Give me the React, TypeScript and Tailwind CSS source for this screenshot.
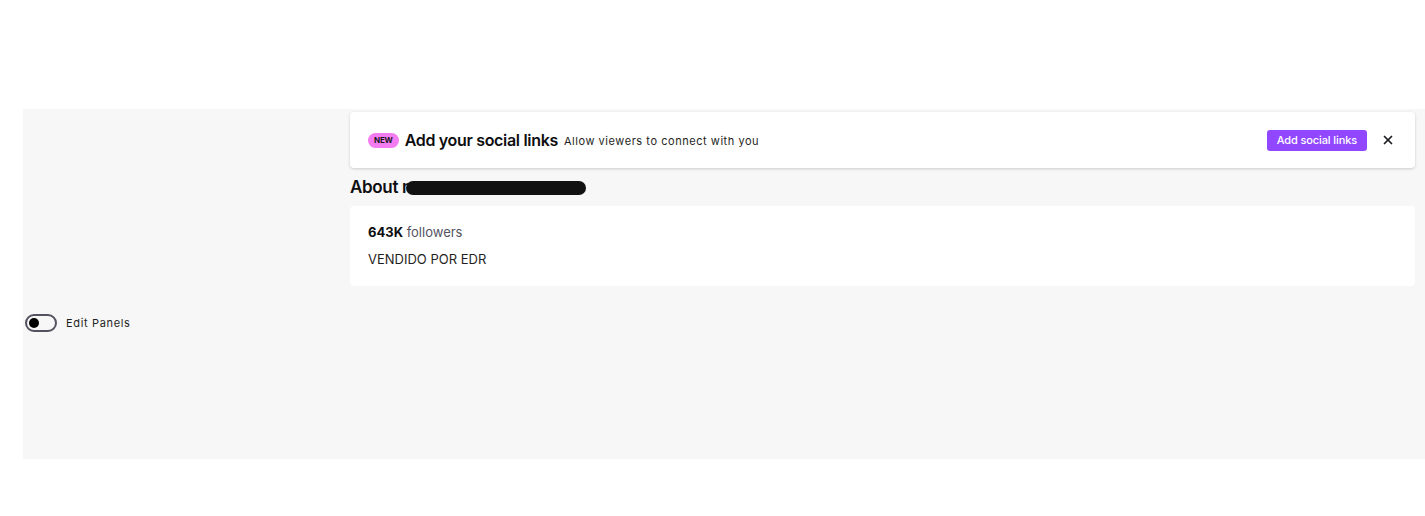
import { X } from "lucide-react";

const App = () => {
  return (
    <div className="h-[516px] bg-white pt-[109px] font-['Inter',sans-serif] text-[#0e0e10]">
      <div className="ml-[23px] flex h-[350px] bg-[#f7f7f8]">
        {/* Left column */}
        <div className="w-[327px] shrink-0 pl-[2px] pt-[205px]">
          <label className="flex items-center gap-[9px]">
            <span className="flex h-[18px] w-[32px] items-center rounded-full border-2 border-[#53535f] px-[2px]">
              <span className="h-[10px] w-[10px] rounded-full bg-black" />
            </span>
            <span className="text-[11px] tracking-[0.06em] text-[#1f1f23]">Edit Panels</span>
          </label>
        </div>

        {/* Main column */}
        <div className="flex-1 pr-[10px] pt-[3px]">
          <div className="flex h-[56px] items-center rounded-[4px] bg-white pl-[18px] pr-[20px] shadow-[0_1px_3px_rgba(0,0,0,0.18)]">
            <span className="mr-[6px] flex h-[15px] items-center rounded-full bg-[#f37df0] px-[6px] text-[8px] font-bold leading-none tracking-tight text-[#18181b]">
              NEW
            </span>
            <span className="text-[16px] font-semibold tracking-[-0.02em]">Add your social links</span>
            <span className="ml-[6px] mt-[3px] text-[11px] tracking-[0.05em] text-[#1f1f23]">
              Allow viewers to connect with you
            </span>
            <button className="ml-auto h-[21px] rounded-[3px] bg-[#9147ff] px-[10px] text-[11px] font-medium tracking-[-0.01em] text-white">
              Add social links
            </button>
            <X className="ml-[14px] h-[14px] w-[14px] text-[#1f1f23]" strokeWidth={3} />
          </div>

          <div className="mt-[10px] flex h-[19px] items-center text-[17px] font-semibold tracking-[-0.02em]">
            <span>About n</span>
            <span className="ml-[-6px] h-[14px] w-[180px] rounded-full bg-[#111]" />
          </div>

          <div className="mt-[9px] h-[80px] rounded-[4px] bg-white px-[18px] pt-[17px] text-[13px]">
            <div>
              <span className="font-bold">643K</span>
              <span className="text-[#53535f]"> followers</span>
            </div>
            <div className="mt-[7px] text-[#1f1f23]">VENDIDO POR EDR</div>
          </div>
        </div>
      </div>
    </div>
  );
};

export default App;
